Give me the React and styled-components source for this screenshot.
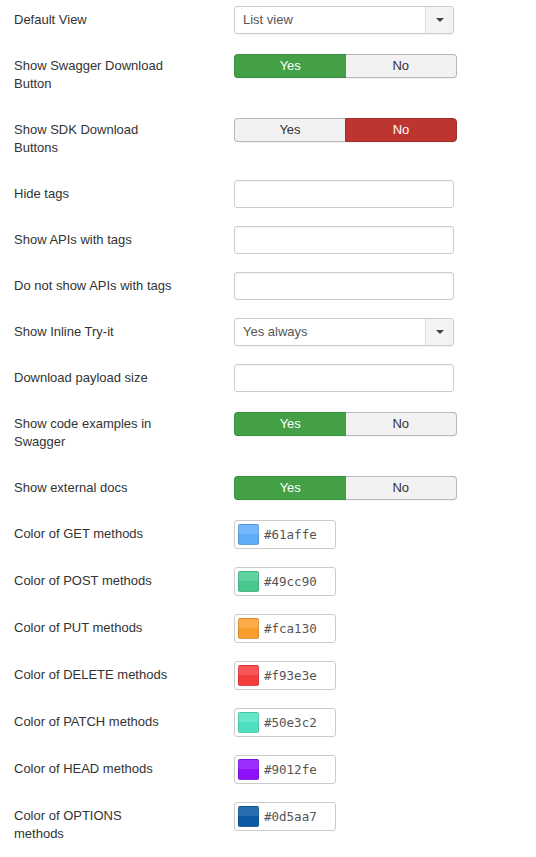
import React from "react";
import styled, { createGlobalStyle } from "styled-components";

const Global = createGlobalStyle`
  html, body { margin: 0; padding: 0; background: #fff; }
  body { font-family: "Liberation Sans", Arial, sans-serif; font-size: 13px; color: #333; }
`;

const Form = styled.div`
  padding: 6px 14px 0 14px;
`;

const Row = styled.div`
  display: grid;
  grid-template-columns: 220px 1fr;
  align-items: start;
  margin-bottom: 18px;
`;

const Label = styled.label`
  display: block;
  max-width: 160px;
  padding-top: 5px;
  margin-bottom: 5px;
  font-size: 13px;
  line-height: 18px;
  color: #333;
`;

const SelectBox = styled.div`
  display: flex;
  width: 220px;
  height: 28px;
  box-sizing: border-box;
  border: 1px solid #ccc;
  border-radius: 3px;
  background: #fff;
  box-shadow: 0 1px 2px rgba(0, 0, 0, 0.06);
  overflow: hidden;
`;

const SelectText = styled.div`
  flex: 1;
  padding-left: 8px;
  line-height: 26px;
  font-size: 13px;
  color: #555;
`;

const SelectArrow = styled.div`
  width: 27px;
  display: flex;
  align-items: center;
  justify-content: center;
  background: #f3f3f3;
  border-left: 1px solid #ddd;
  &::after {
    content: "";
    border-left: 4px solid transparent;
    border-right: 4px solid transparent;
    border-top: 4px solid #444;
  }
`;

const TextInput = styled.input`
  display: block;
  width: 220px;
  height: 28px;
  box-sizing: border-box;
  border: 1px solid #ccc;
  border-radius: 3px;
  background: #fff;
  box-shadow: inset 0 1px 1px rgba(0, 0, 0, 0.05);
  padding: 4px 6px;
  font-family: "Liberation Sans", Arial, sans-serif;
  font-size: 13px;
  outline: none;
`;

const ToggleGroup = styled.div`
  display: flex;
  width: 223px;
  height: 24px;
  margin-top: 2px;
`;

const ToggleBtn = styled.div`
  flex: 1;
  box-sizing: border-box;
  display: flex;
  align-items: center;
  justify-content: center;
  font-size: 13px;
  line-height: 18px;
  border: 1px solid ${(p) => (p.$active ? p.$border : "#b8b8b8")};
  background: ${(p) => (p.$active ? p.$bg : "#f2f2f2")};
  color: ${(p) => (p.$active ? "#fff" : "#333")};
  box-shadow: 0 1px 1px rgba(0, 0, 0, 0.05);
  &:first-child {
    border-radius: 4px 0 0 4px;
    border-right: none;
  }
  &:last-child {
    border-radius: 0 4px 4px 0;
    border-left: ${(p) => (p.$active ? `1px solid ${p.$border}` : "none")};
  }
`;

const ColorBox = styled.div`
  display: flex;
  align-items: center;
  width: 102px;
  height: 29px;
  box-sizing: border-box;
  border: 1px solid #ccc;
  border-radius: 3px;
  background: #fff;
  padding-left: 3px;
  gap: 5px;
`;

const Swatch = styled.span`
  width: 21px;
  height: 21px;
  box-sizing: border-box;
  border-radius: 2px;
  border: 1px solid rgba(0, 0, 0, 0.12);
  background: linear-gradient(
      to bottom,
      rgba(255, 255, 255, 0.12) 0,
      rgba(255, 255, 255, 0.12) 50%,
      rgba(0, 0, 0, 0.02) 50%
    ),
    ${(p) => p.$color};
`;

const ColorText = styled.span`
  font-family: "DejaVu Sans Mono", "Liberation Mono", monospace;
  font-size: 12.5px;
  color: #555;
`;

const GREEN = { bg: "#43a047", border: "#3a8d3d" };
const RED = { bg: "#bd3530", border: "#a52e2a" };

function Toggle({ value }) {
  const yes = value === "yes";
  return (
    <ToggleGroup>
      <ToggleBtn $active={yes} $bg={GREEN.bg} $border={GREEN.border}>Yes</ToggleBtn>
      <ToggleBtn $active={!yes} $bg={RED.bg} $border={RED.border}>No</ToggleBtn>
    </ToggleGroup>
  );
}

function Select({ value }) {
  return (
    <SelectBox>
      <SelectText>{value}</SelectText>
      <SelectArrow />
    </SelectBox>
  );
}

function Color({ value }) {
  return (
    <ColorBox>
      <Swatch $color={value} />
      <ColorText>{value}</ColorText>
    </ColorBox>
  );
}

const rows = [
  ["Default View", <Select value="List view" />],
  ["Show Swagger Download Button", <Toggle value="yes" />],
  ["Show SDK Download Buttons", <Toggle value="no" />],
  ["Hide tags", <TextInput />],
  ["Show APIs with tags", <TextInput />],
  ["Do not show APIs with tags", <TextInput />],
  ["Show Inline Try-it", <Select value="Yes always" />],
  ["Download payload size", <TextInput />],
  ["Show code examples in Swagger", <Toggle value="yes" />],
  ["Show external docs", <Toggle value="yes" />],
  ["Color of GET methods", <Color value="#61affe" />],
  ["Color of POST methods", <Color value="#49cc90" />],
  ["Color of PUT methods", <Color value="#fca130" />],
  ["Color of DELETE methods", <Color value="#f93e3e" />],
  ["Color of PATCH methods", <Color value="#50e3c2" />],
  ["Color of HEAD methods", <Color value="#9012fe" />],
  ["Color of OPTIONS methods", <Color value="#0d5aa7" />],
];

export default function App() {
  return (
    <>
      <Global />
      <Form>
        {rows.map(([label, control]) => (
          <Row key={label}>
            <Label>{label}</Label>
            <div>{control}</div>
          </Row>
        ))}
      </Form>
    </>
  );
}
